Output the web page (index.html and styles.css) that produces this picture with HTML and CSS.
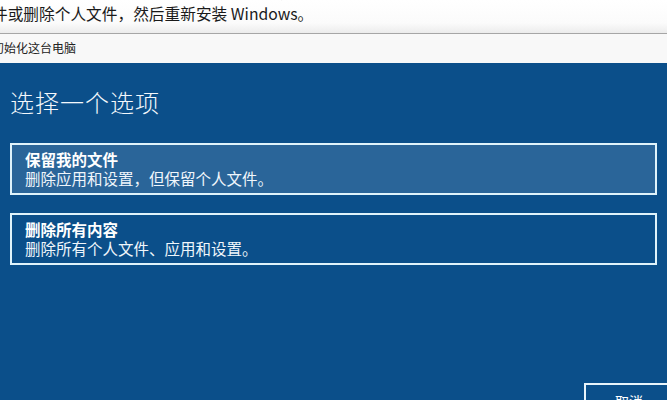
FILE: index.html
```html
<!DOCTYPE html>
<html lang="zh-CN">
<head>
<meta charset="utf-8">
<link rel="stylesheet" href="styles.css">
</head>
<body>
<div class="page">
  <div class="top">
    <p class="prev">这个选项会重新安装 Windows，并允许你选择是保留个人文</p>
    <p class="desc">件或删除个人文件，然后重新安装 Windows。</p>
  </div>
  <div class="titlebar">初始化这台电脑</div>
  <div class="main">
    <h1 class="heading">选择一个选项</h1>
    <div class="options">
      <div class="option selected">
        <div class="opt-title">保留我的文件</div>
        <div class="opt-sub">删除应用和设置，但保留个人文件。</div>
      </div>
      <div class="option">
        <div class="opt-title">删除所有内容</div>
        <div class="opt-sub">删除所有个人文件、应用和设置。</div>
      </div>
    </div>
    <div class="footer">
      <button class="cancel">取消</button>
    </div>
  </div>
</div>
</body>
</html>
```

FILE: styles.css
```css
* { box-sizing: border-box; }
html, body { margin: 0; padding: 0; }
body {
  width: 667px;
  height: 400px;
  overflow: hidden;
  font-family: "Noto Sans CJK SC", "Liberation Sans", sans-serif;
  background: #0b4f8a;
}
.page {
  width: 667px;
  height: 400px;
  display: flex;
  flex-direction: column;
  overflow: hidden;
}
.top {
  height: 34px;
  flex: none;
  background: linear-gradient(#ffffff 0%, #fbfbfb 70%, #ececec 100%);
  border-bottom: 1px solid #a6a6a6;
  overflow: hidden;
  color: #1a1a1a;
}
.prev, .desc {
  margin: 0;
  font-size: 15.7px;
  line-height: 20px;
  white-space: nowrap;
}
.prev { margin-top: -18px; margin-left: -10px; }
.desc { margin-left: -8px; margin-top: 2px; }
.titlebar {
  height: 29px;
  flex: none;
  background: #f8f8f8;
  font-size: 12px;
  line-height: 28px;
  color: #222;
  margin-left: -8px;
  white-space: nowrap;
}
.main {
  flex: 1;
  background: #0b4f8a;
  padding: 0 10px;
  display: flex;
  flex-direction: column;
  color: #fff;
}
.heading {
  margin: 25px 0 0 0;
  font-size: 24px;
  line-height: 28px;
  font-weight: 300;
  color: #f4f8fc;
  letter-spacing: 1px;
}
.options {
  margin-top: 27px;
  display: flex;
  flex-direction: column;
  gap: 18px;
}
.option {
  height: 52px;
  border: 2px solid #dff3fb;
  padding: 5px 0 0 13px;
  background: #0b4f8a;
}
.option.selected {
  background: #2a6599;
}
.opt-title {
  font-size: 15.5px;
  line-height: 19px;
  font-weight: 700;
  color: #fff;
}
.opt-sub {
  font-size: 15.5px;
  line-height: 18px;
  color: #f0f6fb;
}
.footer {
  margin-top: auto;
  display: flex;
  justify-content: flex-end;
  margin-right: -17px;
}
.cancel {
  width: 90px;
  height: 34px;
  margin-bottom: -17px;
  border: 2px solid #e8f4fa;
  background: #0b4f8a;
  color: #fff;
  font-family: "Noto Sans CJK SC", sans-serif;
  font-size: 14px;
  line-height: 18px;
  padding: 2px 0 0 0;
  text-align: center;
  vertical-align: top;
}
```
